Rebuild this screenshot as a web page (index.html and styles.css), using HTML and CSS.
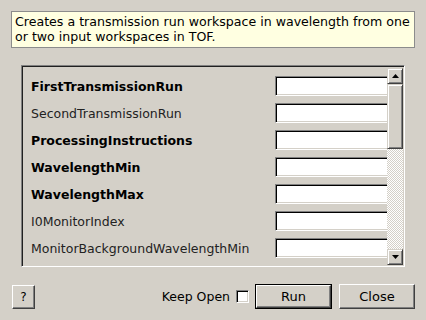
FILE: index.html
```html
<!DOCTYPE html>
<html>
<head>
<meta charset="utf-8">
<link rel="stylesheet" href="styles.css">
</head>
<body>
<div class="dialog">
  <div class="desc">Creates a transmission run workspace in wavelength from one or two input workspaces in TOF.</div>
  <div class="frame">
    <div class="viewport">
      <div class="props">
        <div class="lbl bold">FirstTransmissionRun</div><div class="inp"></div>
        <div class="lbl">SecondTransmissionRun</div><div class="inp"></div>
        <div class="lbl bold">ProcessingInstructions</div><div class="inp"></div>
        <div class="lbl bold">WavelengthMin</div><div class="inp"></div>
        <div class="lbl bold">WavelengthMax</div><div class="inp"></div>
        <div class="lbl">I0MonitorIndex</div><div class="inp"></div>
        <div class="lbl">MonitorBackgroundWavelengthMin</div><div class="inp"></div>
      </div>
    </div>
    <div class="sbar">
      <div class="sbtn"><svg width="7" height="4" viewBox="0 0 7 4"><path d="M3.5 0 L7 4 L0 4 Z" fill="#000"/></svg></div>
      <div class="thumb"></div>
      <div class="track"></div>
      <div class="sbtn"><svg width="7" height="4" viewBox="0 0 7 4"><path d="M0 0 L7 0 L3.5 4 Z" fill="#000"/></svg></div>
    </div>
  </div>
  <div class="bottom">
    <div class="btn help">?</div>
    <div class="spacer"></div>
    <span class="keep">Keep Open</span>
    <span class="check"></span>
    <div class="default"><div class="btn run">Run</div></div>
    <div class="btn close">Close</div>
  </div>
</div>
</body>
</html>
```

FILE: styles.css
```css
html, body {
  margin: 0;
  padding: 0;
  background: #d4d0c8;
  font-family: "DejaVu Sans", sans-serif;
  font-size: 12px;
  color: #000;
}

.dialog {
  width: 426px;
  height: 320px;
  box-sizing: border-box;
  padding: 11px 11px 0 11px;
  display: flex;
  flex-direction: column;
}

.desc {
  height: 37px;
  box-sizing: border-box;
  border: 1px solid #8c8c8c;
  background: #ffffe1;
  padding: 2px 3px;
  line-height: 15px;
  font-size: 12.6px;
  color: #000;
}

.frame {
  margin: 17px 10px 0 10px;
  height: 202px;
  box-sizing: border-box;
  border-top: 1px solid #808080;
  border-left: 1px solid #808080;
  border-right: 1px solid #ffffff;
  border-bottom: 1px solid #ffffff;
  box-shadow: inset 1px 1px 0 #202020, inset -1px -1px 0 #d4d0c8;
  padding: 2px 1px 1px 1px;
  display: flex;
}

.viewport {
  flex: 1;
  overflow: hidden;
  min-width: 0;
}

.props {
  display: grid;
  grid-template-columns: 244px 140px;
  grid-auto-rows: 20px;
  row-gap: 7px;
  padding: 8px 0 0 8px;
  align-items: center;
}

.lbl {
  color: #222;
  white-space: nowrap;
  font-size: 12.5px;
}

.lbl.bold {
  font-weight: bold;
  color: #000;
}

.inp {
  height: 20px;
  box-sizing: border-box;
  background: #fff;
  border-top: 1px solid #808080;
  border-left: 1px solid #808080;
  border-bottom: 1px solid #ffffff;
  border-right: 1px solid #ffffff;
  box-shadow: inset 1px 1px 0 #000, inset -1px -1px 0 #d4d0c8;
}

.sbar {
  width: 16px;
  display: flex;
  flex-direction: column;
}

.sbtn, .thumb {
  box-sizing: border-box;
  background: #d4d0c8;
  border-top: 1px solid #d4d0c8;
  border-left: 1px solid #d4d0c8;
  border-right: 1px solid #404040;
  border-bottom: 1px solid #404040;
  box-shadow: inset 1px 1px 0 #fff, inset -1px -1px 0 #808080;
}

.sbtn {
  height: 16px;
  display: flex;
  align-items: center;
  justify-content: center;
}

.thumb {
  height: 65px;
}

.track {
  flex: 1;
  background: repeating-conic-gradient(#ffffff 0 25%, #d4d0c8 0 50%) 0 0 / 2px 2px;
}

.bottom {
  margin-top: 17px;
  display: flex;
  align-items: center;
  padding-left: 1px;
}

.spacer {
  flex: 1;
}

.btn {
  box-sizing: border-box;
  background: #d4d0c8;
  border-top: 1px solid #ffffff;
  border-left: 1px solid #ffffff;
  border-right: 1px solid #404040;
  border-bottom: 1px solid #404040;
  box-shadow: inset -1px -1px 0 #808080;
  display: flex;
  align-items: center;
  justify-content: center;
  font-size: 13px;
}

.help {
  width: 23px;
  height: 24px;
  font-size: 12px;
}

.keep {
  font-size: 12.5px;
  margin-right: 6px;
}

.check {
  width: 13px;
  height: 13px;
  box-sizing: border-box;
  background: #fff;
  border-top: 1px solid #808080;
  border-left: 1px solid #808080;
  border-right: 1px solid #fff;
  border-bottom: 1px solid #fff;
  box-shadow: inset 1px 1px 0 #000, inset -1px -1px 0 #d4d0c8;
  margin-right: 6px;
}

.default {
  border: 1px solid #000;
  margin-right: 7px;
}

.run {
  width: 75px;
  height: 23px;
}

.close {
  width: 76px;
  height: 25px;
}
```
